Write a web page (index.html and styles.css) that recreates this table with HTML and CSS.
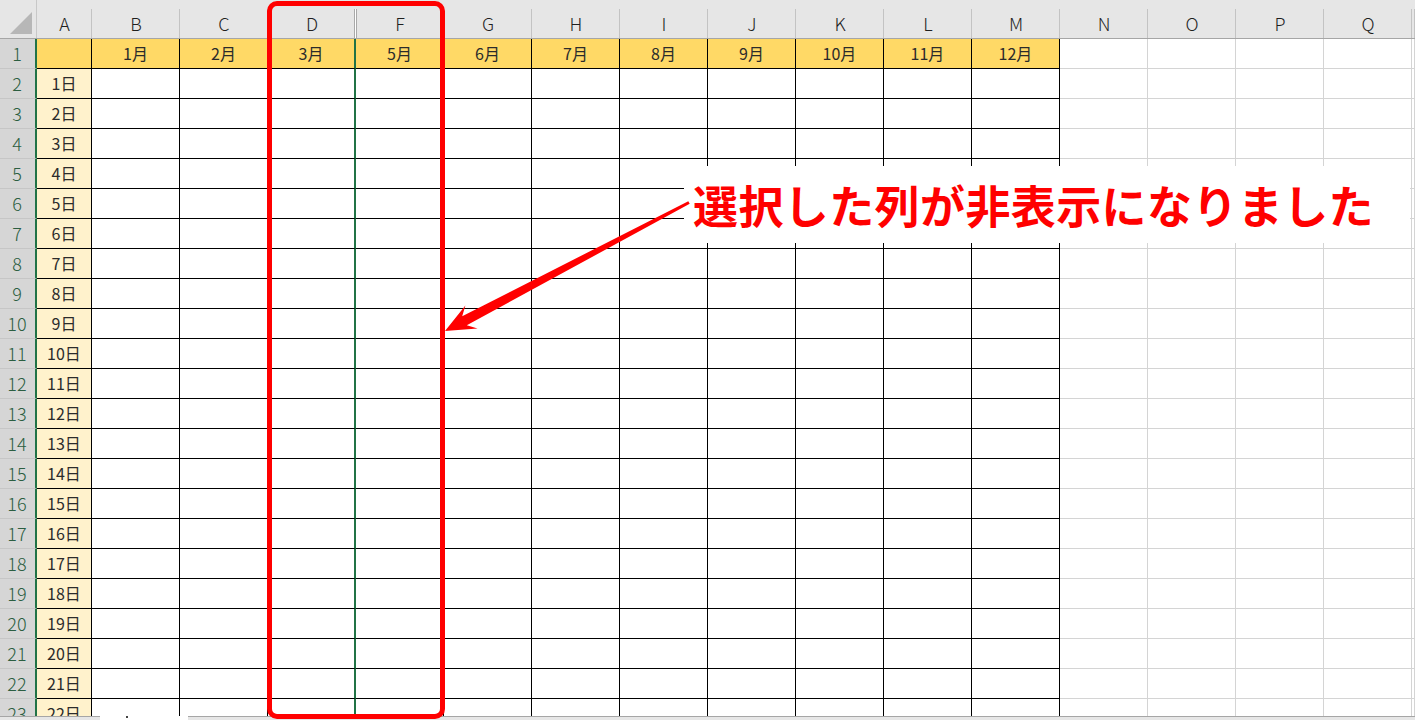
FILE: index.html
```html
<!DOCTYPE html>
<html lang="ja">
<head>
<meta charset="utf-8">
<title>Sheet</title>
<link rel="stylesheet" href="styles.css">
</head>
<body>
<div class="stage">
  <div class="sheet">
    <div class="row head">
      <div class="corner"><span class="tri"></span></div>
      <div class="hc">A</div><div class="hc">B</div><div class="hc">C</div><div class="hc hid">D</div><div class="hc">F</div><div class="hc">G</div><div class="hc">H</div><div class="hc">I</div><div class="hc">J</div><div class="hc">K</div><div class="hc">L</div><div class="hc">M</div><div class="hc">N</div><div class="hc">O</div><div class="hc">P</div><div class="hc">Q</div><div class="hc"></div>
    </div>
    <div class="row">
      <div class="rh">1</div>
      <div class="c t y"></div><div class="c t y">1月</div><div class="c t y">2月</div><div class="c t y d">3月</div><div class="c t y">5月</div><div class="c t y">6月</div><div class="c t y">7月</div><div class="c t y">8月</div><div class="c t y">9月</div><div class="c t y">10月</div><div class="c t y">11月</div><div class="c t y">12月</div><div class="c g"></div><div class="c g"></div><div class="c g"></div><div class="c g"></div><div class="c g"></div>
    </div>
    <div class="row"><div class="rh">2</div><div class="c t a">1日</div><div class="c t"></div><div class="c t"></div><div class="c t d"></div><div class="c t"></div><div class="c t"></div><div class="c t"></div><div class="c t"></div><div class="c t"></div><div class="c t"></div><div class="c t"></div><div class="c t"></div><div class="c g"></div><div class="c g"></div><div class="c g"></div><div class="c g"></div><div class="c g"></div></div>
    <div class="row"><div class="rh">3</div><div class="c t a">2日</div><div class="c t"></div><div class="c t"></div><div class="c t d"></div><div class="c t"></div><div class="c t"></div><div class="c t"></div><div class="c t"></div><div class="c t"></div><div class="c t"></div><div class="c t"></div><div class="c t"></div><div class="c g"></div><div class="c g"></div><div class="c g"></div><div class="c g"></div><div class="c g"></div></div>
    <div class="row"><div class="rh">4</div><div class="c t a">3日</div><div class="c t"></div><div class="c t"></div><div class="c t d"></div><div class="c t"></div><div class="c t"></div><div class="c t"></div><div class="c t"></div><div class="c t"></div><div class="c t"></div><div class="c t"></div><div class="c t"></div><div class="c g"></div><div class="c g"></div><div class="c g"></div><div class="c g"></div><div class="c g"></div></div>
    <div class="row"><div class="rh">5</div><div class="c t a">4日</div><div class="c t"></div><div class="c t"></div><div class="c t d"></div><div class="c t"></div><div class="c t"></div><div class="c t"></div><div class="c t"></div><div class="c t"></div><div class="c t"></div><div class="c t"></div><div class="c t"></div><div class="c g"></div><div class="c g"></div><div class="c g"></div><div class="c g"></div><div class="c g"></div></div>
    <div class="row"><div class="rh">6</div><div class="c t a">5日</div><div class="c t"></div><div class="c t"></div><div class="c t d"></div><div class="c t"></div><div class="c t"></div><div class="c t"></div><div class="c t"></div><div class="c t"></div><div class="c t"></div><div class="c t"></div><div class="c t"></div><div class="c g"></div><div class="c g"></div><div class="c g"></div><div class="c g"></div><div class="c g"></div></div>
    <div class="row"><div class="rh">7</div><div class="c t a">6日</div><div class="c t"></div><div class="c t"></div><div class="c t d"></div><div class="c t"></div><div class="c t"></div><div class="c t"></div><div class="c t"></div><div class="c t"></div><div class="c t"></div><div class="c t"></div><div class="c t"></div><div class="c g"></div><div class="c g"></div><div class="c g"></div><div class="c g"></div><div class="c g"></div></div>
    <div class="row"><div class="rh">8</div><div class="c t a">7日</div><div class="c t"></div><div class="c t"></div><div class="c t d"></div><div class="c t"></div><div class="c t"></div><div class="c t"></div><div class="c t"></div><div class="c t"></div><div class="c t"></div><div class="c t"></div><div class="c t"></div><div class="c g"></div><div class="c g"></div><div class="c g"></div><div class="c g"></div><div class="c g"></div></div>
    <div class="row"><div class="rh">9</div><div class="c t a">8日</div><div class="c t"></div><div class="c t"></div><div class="c t d"></div><div class="c t"></div><div class="c t"></div><div class="c t"></div><div class="c t"></div><div class="c t"></div><div class="c t"></div><div class="c t"></div><div class="c t"></div><div class="c g"></div><div class="c g"></div><div class="c g"></div><div class="c g"></div><div class="c g"></div></div>
    <div class="row"><div class="rh">10</div><div class="c t a">9日</div><div class="c t"></div><div class="c t"></div><div class="c t d"></div><div class="c t"></div><div class="c t"></div><div class="c t"></div><div class="c t"></div><div class="c t"></div><div class="c t"></div><div class="c t"></div><div class="c t"></div><div class="c g"></div><div class="c g"></div><div class="c g"></div><div class="c g"></div><div class="c g"></div></div>
    <div class="row"><div class="rh">11</div><div class="c t a">10日</div><div class="c t"></div><div class="c t"></div><div class="c t d"></div><div class="c t"></div><div class="c t"></div><div class="c t"></div><div class="c t"></div><div class="c t"></div><div class="c t"></div><div class="c t"></div><div class="c t"></div><div class="c g"></div><div class="c g"></div><div class="c g"></div><div class="c g"></div><div class="c g"></div></div>
    <div class="row"><div class="rh">12</div><div class="c t a">11日</div><div class="c t"></div><div class="c t"></div><div class="c t d"></div><div class="c t"></div><div class="c t"></div><div class="c t"></div><div class="c t"></div><div class="c t"></div><div class="c t"></div><div class="c t"></div><div class="c t"></div><div class="c g"></div><div class="c g"></div><div class="c g"></div><div class="c g"></div><div class="c g"></div></div>
    <div class="row"><div class="rh">13</div><div class="c t a">12日</div><div class="c t"></div><div class="c t"></div><div class="c t d"></div><div class="c t"></div><div class="c t"></div><div class="c t"></div><div class="c t"></div><div class="c t"></div><div class="c t"></div><div class="c t"></div><div class="c t"></div><div class="c g"></div><div class="c g"></div><div class="c g"></div><div class="c g"></div><div class="c g"></div></div>
    <div class="row"><div class="rh">14</div><div class="c t a">13日</div><div class="c t"></div><div class="c t"></div><div class="c t d"></div><div class="c t"></div><div class="c t"></div><div class="c t"></div><div class="c t"></div><div class="c t"></div><div class="c t"></div><div class="c t"></div><div class="c t"></div><div class="c g"></div><div class="c g"></div><div class="c g"></div><div class="c g"></div><div class="c g"></div></div>
    <div class="row"><div class="rh">15</div><div class="c t a">14日</div><div class="c t"></div><div class="c t"></div><div class="c t d"></div><div class="c t"></div><div class="c t"></div><div class="c t"></div><div class="c t"></div><div class="c t"></div><div class="c t"></div><div class="c t"></div><div class="c t"></div><div class="c g"></div><div class="c g"></div><div class="c g"></div><div class="c g"></div><div class="c g"></div></div>
    <div class="row"><div class="rh">16</div><div class="c t a">15日</div><div class="c t"></div><div class="c t"></div><div class="c t d"></div><div class="c t"></div><div class="c t"></div><div class="c t"></div><div class="c t"></div><div class="c t"></div><div class="c t"></div><div class="c t"></div><div class="c t"></div><div class="c g"></div><div class="c g"></div><div class="c g"></div><div class="c g"></div><div class="c g"></div></div>
    <div class="row"><div class="rh">17</div><div class="c t a">16日</div><div class="c t"></div><div class="c t"></div><div class="c t d"></div><div class="c t"></div><div class="c t"></div><div class="c t"></div><div class="c t"></div><div class="c t"></div><div class="c t"></div><div class="c t"></div><div class="c t"></div><div class="c g"></div><div class="c g"></div><div class="c g"></div><div class="c g"></div><div class="c g"></div></div>
    <div class="row"><div class="rh">18</div><div class="c t a">17日</div><div class="c t"></div><div class="c t"></div><div class="c t d"></div><div class="c t"></div><div class="c t"></div><div class="c t"></div><div class="c t"></div><div class="c t"></div><div class="c t"></div><div class="c t"></div><div class="c t"></div><div class="c g"></div><div class="c g"></div><div class="c g"></div><div class="c g"></div><div class="c g"></div></div>
    <div class="row"><div class="rh">19</div><div class="c t a">18日</div><div class="c t"></div><div class="c t"></div><div class="c t d"></div><div class="c t"></div><div class="c t"></div><div class="c t"></div><div class="c t"></div><div class="c t"></div><div class="c t"></div><div class="c t"></div><div class="c t"></div><div class="c g"></div><div class="c g"></div><div class="c g"></div><div class="c g"></div><div class="c g"></div></div>
    <div class="row"><div class="rh">20</div><div class="c t a">19日</div><div class="c t"></div><div class="c t"></div><div class="c t d"></div><div class="c t"></div><div class="c t"></div><div class="c t"></div><div class="c t"></div><div class="c t"></div><div class="c t"></div><div class="c t"></div><div class="c t"></div><div class="c g"></div><div class="c g"></div><div class="c g"></div><div class="c g"></div><div class="c g"></div></div>
    <div class="row"><div class="rh">21</div><div class="c t a">20日</div><div class="c t"></div><div class="c t"></div><div class="c t d"></div><div class="c t"></div><div class="c t"></div><div class="c t"></div><div class="c t"></div><div class="c t"></div><div class="c t"></div><div class="c t"></div><div class="c t"></div><div class="c g"></div><div class="c g"></div><div class="c g"></div><div class="c g"></div><div class="c g"></div></div>
    <div class="row"><div class="rh">22</div><div class="c t a">21日</div><div class="c t"></div><div class="c t"></div><div class="c t d"></div><div class="c t"></div><div class="c t"></div><div class="c t"></div><div class="c t"></div><div class="c t"></div><div class="c t"></div><div class="c t"></div><div class="c t"></div><div class="c g"></div><div class="c g"></div><div class="c g"></div><div class="c g"></div><div class="c g"></div></div>
    <div class="row"><div class="rh">23</div><div class="c t a">22日</div><div class="c t"></div><div class="c t"></div><div class="c t d"></div><div class="c t"></div><div class="c t"></div><div class="c t"></div><div class="c t"></div><div class="c t"></div><div class="c t"></div><div class="c t"></div><div class="c t"></div><div class="c g"></div><div class="c g"></div><div class="c g"></div><div class="c g"></div><div class="c g"></div></div>
  </div>
  <div class="tabs">
    <div class="tabs-nav"></div>
    <div class="tab-active"><span class="tab-mark"></span></div>
    <div class="tabs-rest"></div>
  </div>

  <div class="frame"></div>
  <div class="callout">選択した列が非表示になりました</div>
  <svg class="arrow" width="1415" height="720" viewBox="0 0 1415 720" aria-hidden="true">
    <polygon fill="#ff0000" points="688.3,201.2 462.2,316.3 465.4,305.5 445,331 477.6,328.5 466.8,325.2 689.7,203.8"/>
  </svg>
</div>
</body>
</html>
```

FILE: styles.css
```css
* { box-sizing: border-box; }
html, body { margin: 0; padding: 0; background: #fff; }
body {
  width: 1415px;
  height: 720px;
  overflow: hidden;
  font-family: "Noto Sans CJK JP", "Noto Sans", sans-serif;
}
.stage {
  position: relative;
  width: 1415px;
  height: 720px;
  overflow: hidden;
  display: flex;
  flex-direction: column;
}
.sheet {
  height: 716px;
  overflow: hidden;
  flex: none;
}
.row {
  display: grid;
  grid-template-columns: 37px 55px repeat(15, 88px) 3px;
  height: 30px;
}
.row.head {
  height: 39px;
  background: #e6e6e6;
  border-bottom: 1px solid #a6a6a6;
}
.corner {
  position: relative;
  border-right: 1px solid #c8c8c8;
}
.tri {
  position: absolute;
  right: 4px;
  bottom: 4px;
  width: 0;
  height: 0;
  border-left: 22px solid transparent;
  border-bottom: 22px solid #b7b7b7;
}
.hc {
  position: relative;
  padding-top: 8px;
  text-align: center;
  font-size: 18px;
  font-weight: 300;
  line-height: 30px;
  color: #1f1f1f;
}
.hc::after {
  content: "";
  position: absolute;
  right: 0;
  top: 9px;
  bottom: 0;
  width: 1px;
  background: #c3c3c3;
}
.hc.hid::after {
  width: 3px;
  right: -1px;
  background: linear-gradient(90deg, #a9a9a9 0 33%, #ffffff 33% 67%, #a9a9a9 67% 100%);
}
.rh {
  background: #d6d6d6;
  border-right: 2px solid #217346;
  border-bottom: 1px solid #c6c6c6;
  text-align: center;
  font-size: 18px;
  font-weight: 300;
  line-height: 29px;
  color: #2b5e41;
  padding-right: 1px;
}
.c {
  font-size: 16px;
  line-height: 29px;
  text-align: center;
  color: #2b2b2b;
}
.c.t {
  border-right: 1px solid #000;
  border-bottom: 1px solid #000;
}
.c.d {
  border-right: 2px solid #217346;
}
.c.y { background: #ffd966; }
.c.a { background: #fff2cc; }
.c.g {
  border-right: 1px solid #d4d4d4;
  border-bottom: 1px solid #d4d4d4;
}
.tabs {
  display: flex;
  height: 4px;
  flex: none;
}
.tabs-nav {
  width: 100px;
  background: #e6e6e6;
  border-top: 1px solid #a6a6a6;
}
.tab-active {
  width: 88px;
  background: #fff;
  position: relative;
}
.tab-mark {
  position: absolute;
  left: 26px;
  top: 0;
  width: 2px;
  height: 2px;
  background: #444;
}
.tabs-rest {
  flex: 1;
  background: #e6e6e6;
  border-top: 1px solid #a6a6a6;
}
.frame {
  position: absolute;
  left: 267px;
  top: 1px;
  width: 178px;
  height: 718px;
  border: 5px solid #ff0000;
  border-radius: 10px;
}
.callout {
  position: absolute;
  left: 684px;
  top: 166px;
  width: 726px;
  height: 77px;
  background: #fff;
  color: #ff0000;
  font-family: "Noto Sans CJK JP", sans-serif;
  font-weight: 700;
  font-size: 45px;
  line-height: 77px;
  letter-spacing: 0.4px;
  padding-left: 9px;
  white-space: nowrap;
}
.arrow {
  position: absolute;
  left: 0;
  top: 0;
}
```
